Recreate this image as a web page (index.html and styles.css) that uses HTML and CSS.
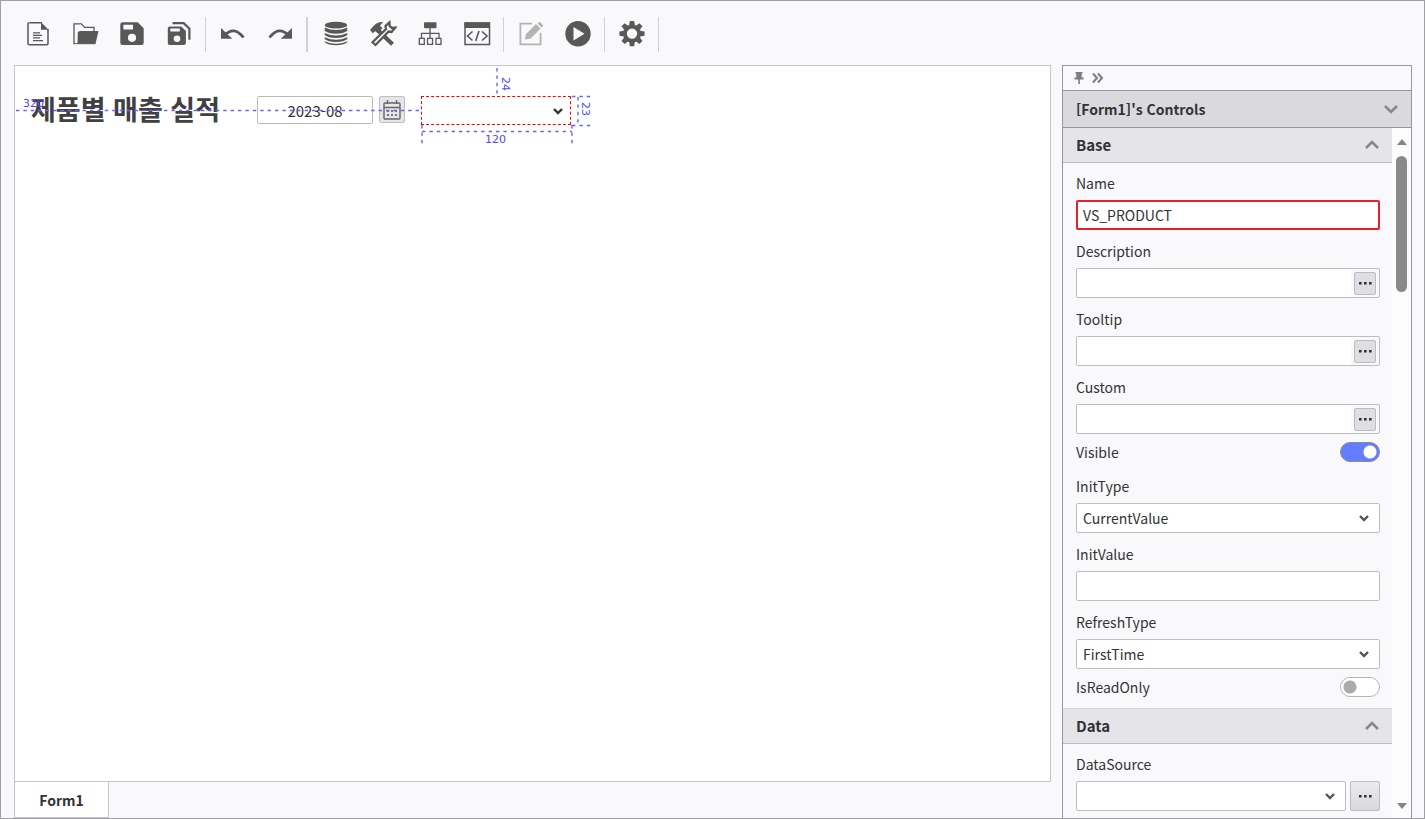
FILE: index.html
```
<!DOCTYPE html>
<html lang="ko">
<head>
<meta charset="utf-8">
<title>Form Designer</title>
<link rel="stylesheet" href="styles.css">
</head>
<body>
<svg class="defs" aria-hidden="true">
  <symbol id="caret" viewBox="0 0 12 8"><path d="M2 2l4 4 4-4" fill="none" stroke="currentColor" stroke-width="2.4"/></symbol>
  <symbol id="fold" viewBox="0 0 16 10"><path d="M2 8l6-6 6 6" fill="none" stroke="currentColor" stroke-width="2.6"/></symbol>
  <symbol id="dots" viewBox="0 0 14 4"><path d="M1 1h2.6v2.4H1zM6 1h2.6v2.4H6zM11 1h2.6v2.4H11z" fill="currentColor"/></symbol>
</svg>
<div class="app">
  <header class="toolbar">
    <button class="tool" aria-label="New"><svg viewBox="0 0 28 28"><path d="M5.500 2.800h12.500M24 9v14.500q0 1.200-1.200 1.200H5.200Q4 24.700 4 23.500V4Q4 2.800 5.200 2.800" fill="none" stroke="currentColor" stroke-width="1.500"/><path d="M17 2.300L24.600 9.700H17z" fill="currentColor"/><path d="M9 12.800h7M9 15.300h9M9 17.900h7M9 20.600h10" stroke="currentColor" stroke-width="1.300"/></svg></button>
    <button class="tool" aria-label="Open"><svg viewBox="0 0 28 28"><path d="M3 24V3.800h7.500l3 3.500H23v4" fill="none" stroke="currentColor" stroke-width="1.300"/><path d="M9 11h18.500l-3 12.800H6.500L6.800 12.600Q7.300 11 9 11z" fill="currentColor"/><path d="M2.400 23.700h22" stroke="currentColor" stroke-width="1"/></svg></button>
    <button class="tool" aria-label="Save"><svg viewBox="0 0 28 28"><path fill="currentColor" fill-rule="evenodd" d="M4.500 2.200h15.200l6 6v14.600q0 2.200-2.200 2.200h-19q-2.200 0-2.200-2.200V4.400q0-2.200 2.200-2.200zM5.400 4.800v4.600h9.600V4.800zM14 13.700a4.100 4.100 0 1 0 0 8.200 4.100 4.100 0 1 0 0-8.200z"/></svg></button>
    <button class="tool" aria-label="Save all"><svg viewBox="0 0 28 28"><path fill="currentColor" fill-rule="evenodd" d="M4.800 6.400h11.600l4.500 4.600v11.800q0 2.200-2.200 2.200H4.800q-2 0-2-2V8.400q0-2 2-2zM5.300 8.600v3h9.500v-3zM12 15.500a3.300 3.300 0 1 0 0 6.600 3.300 3.300 0 1 0 0-6.600z"/><path d="M7.500 3.200h11.200l5.700 5.600v11" fill="none" stroke="currentColor" stroke-width="2.200"/></svg></button>
    <span class="sep"></span>
    <button class="tool" aria-label="Undo"><svg viewBox="0 0 28 28"><path d="M6 15q9-9.500 18.500 2.500" fill="none" stroke="currentColor" stroke-width="2.800"/><path d="M2 8v10.700h11.200z" fill="currentColor"/></svg></button>
    <button class="tool" aria-label="Redo"><svg viewBox="0 0 28 28"><path d="M22 15Q13 5.500 3.500 17.500" fill="none" stroke="currentColor" stroke-width="2.800"/><path d="M26 8v10.700H14.800z" fill="currentColor"/></svg></button>
    <span class="sep thick"></span>
    <button class="tool" aria-label="Database"><svg viewBox="0 0 28 28"><ellipse cx="14" cy="5.200" rx="11.300" ry="3.400" fill="currentColor"/><path fill="currentColor" d="M2.700 7.600q11.300 5 22.600 0v3.200q-3.500 3-11.300 3t-11.300-3zM2.700 12.900q11.300 5 22.600 0v2.200q-3.500 3-11.300 3t-11.300-3zM2.700 17.200q11.300 5 22.600 0v1.900q-3.500 3-11.300 3t-11.300-3zM2.700 21.200q11.300 5 22.600 0v1.100q-3.500 3-11.300 3t-11.300-3z"/></svg></button>
    <button class="tool" aria-label="Tools"><svg viewBox="0 0 28 28"><path d="M8 9.500l15.500 14.700" stroke="currentColor" stroke-width="4.200"/><path d="M1 10L4.500 6q4-4.500 9.500-4L11 5.700l2.500 2.500-5 5-2-2.200-2.700 2.300z" fill="currentColor"/><path d="M3.500 22.300L17 9l-.5-3L20.400 2.400l.3 3.800 2.200 1.800 3.300-.4L22.600 12l-3-.5L6.500 25z" fill="#f9f9fc" stroke="currentColor" stroke-width="2.300"/></svg></button>
    <button class="tool" aria-label="Structure"><svg viewBox="0 0 28 28"><rect x="8" y="2.300" width="12.500" height="6" rx="1" fill="currentColor"/><path d="M14 8v10M5.500 18v-4.700h17.500V18M3.300 18.300h5v6h-5zM11.500 18.300h5v6h-5zM20 18.300h5v6h-5z" fill="none" stroke="currentColor" stroke-width="1.300"/></svg></button>
    <button class="tool" aria-label="Script"><svg viewBox="0 0 28 28"><rect x="2" y="3" width="24.500" height="21.500" fill="none" stroke="currentColor" stroke-width="1.500"/><path d="M1.500 2.300h25.500v5.700H1.500z" fill="currentColor"/><path d="M9.500 11.500l-5 4.500 5 4.500M19 11.500l5 4.500-5 4.500M16 11l-3.300 10" fill="none" stroke="currentColor" stroke-width="1.600"/></svg></button>
    <span class="sep"></span>
    <button class="tool" aria-label="Edit" disabled><svg viewBox="0 0 28 28"><path d="M15 3.700H3.400v20.600h20.200V13" fill="none" stroke="currentColor" stroke-width="1.800"/><path d="M8 19.500l.8-5.300L19 4l4.600 4.600-10.200 10.200zM20.500 3.500l1-1q1-1 2 0l2 2q1 1 0 2l-1 1z" fill="currentColor"/></svg></button>
    <button class="tool" aria-label="Run"><svg viewBox="0 0 28 28"><path fill="currentColor" fill-rule="evenodd" d="M14 1a12.700 12.700 0 1 0 0 25.400A12.700 12.700 0 1 0 14 1zM9.500 7v13.600l11-6.800z"/></svg></button>
    <span class="sep"></span>
    <button class="tool" aria-label="Settings"><svg viewBox="0 0 28 28"><circle cx="14" cy="13.600" r="7.100" fill="none" stroke="currentColor" stroke-width="3.800"/><g fill="currentColor"><path id="tooth" d="M11.800 1h4.400l.6 4.500h-5.600z"/><use href="#tooth" transform="rotate(45 14 13.600)"/><use href="#tooth" transform="rotate(90 14 13.600)"/><use href="#tooth" transform="rotate(135 14 13.600)"/><use href="#tooth" transform="rotate(180 14 13.600)"/><use href="#tooth" transform="rotate(225 14 13.600)"/><use href="#tooth" transform="rotate(270 14 13.600)"/><use href="#tooth" transform="rotate(315 14 13.600)"/></g></svg></button>
    <span class="sep"></span>
  </header>
  <div class="work">
    <main class="editor">
      <section class="canvas">
        <h1 class="title">제품별 매출 실적</h1>
        <input class="date" type="text" value="2023-08" aria-label="Month">
        <button class="calendar" aria-label="Pick month"><svg viewBox="0 0 20 22"><rect x="2" y="4" width="16" height="16" rx="1" fill="none" stroke="#666" stroke-width="1.400"/><path d="M2 8.500h16M5.500 1v4M14.500 1v4" stroke="#666" stroke-width="1.400"/><path d="M5 12h10M5 16h10" stroke="#777" stroke-width="2" stroke-dasharray="2 2"/></svg></button>
        <div class="picked"><select aria-label="VS_PRODUCT"><option></option></select><svg class="caret"><use href="#caret"/></svg></div>
        <svg class="guides" aria-hidden="true">
          <path d="M1 44.500H404M482 2V28M407 65.500H557M407 59V79M557 59V79M557 30.500H576M557 59.500H576M563 31V59"/>
          <text x="8" y="41">320</text>
          <text x="470" y="77">120</text>
          <text transform="translate(487 11) rotate(90)">24</text>
          <text transform="translate(567 36) rotate(90)">23</text>
        </svg>
      </section>
      <nav class="tabs"><button class="tab">Form1</button></nav>
    </main>
    <aside class="panel">
      <div class="panel-tools">
        <button aria-label="Pin"><svg class="pin" viewBox="0 0 12 14"><path d="M2.500 1h7v1.500h-.8v4h1.800v2h-3.600V13H5.300V8.500H1.500v-2h1.800v-4h-.8z" fill="currentColor"/></svg></button>
        <button aria-label="Collapse"><svg class="more" viewBox="0 0 14 12"><path d="M2 1.500L6 6l-4 4.500M7 1.500L11 6l-4 4.500" fill="none" stroke="currentColor" stroke-width="2"/></svg></button>
      </div>
      <button class="panel-title">[Form1]'s Controls<svg class="fold down"><use href="#fold"/></svg></button>
      <div class="scroller">
        <div class="props">
          <button class="group">Base<svg class="fold"><use href="#fold"/></svg></button>
          <div class="fields">
            <div class="field"><label for="name">Name</label><input class="box marked" id="name" type="text" value="VS_PRODUCT"></div>
            <div class="field"><label for="desc">Description</label><div class="box combo"><input id="desc" type="text"><button class="mini" aria-label="Edit description"><svg class="dots"><use href="#dots"/></svg></button></div></div>
            <div class="field"><label for="tip">Tooltip</label><div class="box combo"><input id="tip" type="text"><button class="mini" aria-label="Edit tooltip"><svg class="dots"><use href="#dots"/></svg></button></div></div>
            <div class="field"><label for="custom">Custom</label><div class="box combo"><input id="custom" type="text"><button class="mini" aria-label="Edit custom"><svg class="dots"><use href="#dots"/></svg></button></div></div>
            <div class="switch"><label for="visible">Visible</label><input id="visible" type="checkbox" checked></div>
            <div class="field"><label for="itype">InitType</label><div class="box pick"><select id="itype"><option>CurrentValue</option></select><svg class="caret"><use href="#caret"/></svg></div></div>
            <div class="field"><label for="ivalue">InitValue</label><input class="box" id="ivalue" type="text"></div>
            <div class="field"><label for="rtype">RefreshType</label><div class="box pick"><select id="rtype"><option>FirstTime</option></select><svg class="caret"><use href="#caret"/></svg></div></div>
            <div class="switch"><label for="ro">IsReadOnly</label><input id="ro" type="checkbox"></div>
          </div>
          <button class="group ruled">Data<svg class="fold"><use href="#fold"/></svg></button>
          <div class="fields">
            <div class="field"><label for="source">DataSource</label><div class="pair"><div class="box pick"><select id="source"><option></option></select><svg class="caret"><use href="#caret"/></svg></div><button class="browse" aria-label="Browse data sources"><svg class="dots"><use href="#dots"/></svg></button></div></div>
          </div>
        </div>
        <div class="scrollbar"><span class="arrow up"></span><span class="thumb"></span><span class="arrow"></span></div>
      </div>
    </aside>
  </div>
</div>
</body>
</html>
```
FILE: styles.css
```
* { box-sizing: border-box; }
body {
  margin: 0;
  font: 15px/20px "Noto Sans CJK KR", "Noto Sans", sans-serif;
  color: #333;
}
button, input, select { font: inherit; color: inherit; margin: 0; }
button { padding: 0; border: 0; background: none; }
input, select { min-width: 0; outline: 0; }
svg { display: block; flex: none; }
.defs { position: absolute; width: 0; height: 0; }

.app {
  display: flex;
  flex-direction: column;
  height: 100vh;
  border: 1px solid #a0a0a4;
  background: #f9f9fc;
  overflow: hidden;
}
.toolbar { display: flex; align-items: center; flex: none; height: 64px; padding: 2px 13px 0; }
.tool { display: grid; place-items: center; width: 47px; height: 40px; color: #585858; }
.tool svg { width: 28px; height: 28px; }
.tool:disabled { color: #b4b4b4; }
.sep { width: 1px; height: 35px; margin: 0 3px; background: #d2d2d5; }
.sep.thick { width: 2px; margin: 0 4px 0 3px; }

.work { display: flex; flex: 1; min-height: 0; padding: 0 12px 0 13px; gap: 11px; }
.editor { display: flex; flex-direction: column; flex: 1; min-width: 0; }
.canvas { position: relative; flex: 1; border: 1px solid #c6c6c9; background: #fff; }
.tabs { display: flex; flex: none; height: 36px; }
.tab { width: 95px; border: 1px solid #c6c6c9; border-top: 0; background: #fff; font-weight: 700; font-size: 14px; }

/* Controls placed on the form */
.title { position: absolute; left: 16px; top: 27px; margin: 0; font: 700 27px/32px "Noto Sans CJK KR", sans-serif; color: #404040; white-space: nowrap; }
.date { position: absolute; left: 242px; top: 30px; width: 116px; height: 28px; border: 1px solid #b9b9bc; border-radius: 2px; text-align: center; }
.calendar { position: absolute; left: 364px; top: 30px; display: grid; place-items: center; width: 26px; height: 27px; border: 1px solid #c0c0c3; border-radius: 2px; background: #e6e6ea; }
.calendar svg { width: 20px; height: 22px; }
.picked { position: absolute; left: 406px; top: 30px; display: flex; align-items: center; width: 150px; height: 29px; padding-right: 6px; border: 1px dashed #f00; }
.guides { position: absolute; inset: 0; width: 100%; height: 100%; pointer-events: none; }
.guides path { fill: none; stroke: #6464fa; stroke-width: 1.4; stroke-dasharray: 3.4 4; }
.guides text { font: 11px "DejaVu Sans", sans-serif; fill: #4b4bf5; }

/* Property panel */
.panel { display: flex; flex-direction: column; flex: 0 0 350px; border: 1px solid #98989b; border-bottom: 0; }
.panel-tools { display: flex; align-items: center; gap: 6px; height: 24px; flex: none; padding-left: 10px; color: #7c7c80; }
.pin { width: 12px; height: 14px; }
.more { width: 14px; height: 12px; }
.panel-title, .group { display: flex; align-items: center; justify-content: space-between; flex: none; width: 100%; font-weight: 700; text-align: left; }
.panel-title { height: 38px; padding: 0 12px 0 13px; border: solid #98989b; border-width: 1px 0; background: #dadade; font-size: 14px; }
.fold { width: 16px; height: 10px; color: #88888c; }
.fold.down { transform: rotate(180deg); }
.scroller { display: flex; flex: 1; min-height: 0; }
.props { flex: 1; min-width: 0; overflow: hidden; }
.group { height: 35px; padding: 0 12px 0 13px; border-bottom: 1px solid #bcbcc0; background: #e5e5e9; }
.ruled { height: 36px; border-top: 1px solid #d6d6da; }
.fields { display: flex; flex-direction: column; gap: 8px; padding: 7px 12px 8px 13px; font-size: 14px; }
.field { display: flex; flex-direction: column; gap: 4px; }
.field label { line-height: 26px; }
.box { width: 100%; height: 30px; padding: 0 6px; border: 1px solid #bdbdc0; border-radius: 2px; background: #fff; }
.marked { border: 2px solid #e8202a; padding: 0 5px; }
.combo { display: flex; align-items: center; padding: 0 3px 0 0; background: #f9f9fc; gap: 3px; }
.combo input { flex: 1; height: 28px; border: 0; background: #fff; }
.mini { display: grid; place-items: center; width: 22px; height: 23px; border: 1px solid #bdbdc0; border-radius: 2px; background: #dfdfe3; }
.dots { width: 14px; height: 4px; color: #333; }
.pick { display: flex; align-items: center; padding-right: 9px; }
.pick select, .picked select { flex: 1; height: 26px; padding: 0; border: 0; appearance: none; background: none; }
.caret { width: 12px; height: 8px; color: #555; }
.picked .caret { color: #333; }
.pair { display: flex; gap: 4px; }
.pair .box { flex: 1; }
.browse { display: grid; place-items: center; width: 30px; height: 30px; border: 1px solid #bdbdc0; border-radius: 2px; background: linear-gradient(#ebebef, #d9d9dd); }
.switch { display: flex; justify-content: space-between; padding-bottom: 3px; }
.switch input { width: 40px; height: 20px; border: 1px solid #b5b5b8; border-radius: 10px; appearance: none; background: radial-gradient(circle at 9px 9px, #ababab 6px, transparent 7px) #fff; }
.switch input:checked { border-color: #8c8c94; background: radial-gradient(circle at 29px 9px, #fff 6px, transparent 7px) #627dff; }

.scrollbar { display: flex; flex-direction: column; align-items: center; width: 19px; padding: 11px 0 9px; background: #fcfcfc; }
.arrow { border: 5px solid transparent; border-top: 6px solid #858585; border-bottom: 0; }
.arrow.up { border-top: 0; border-bottom: 6px solid #858585; }
.thumb { width: 11px; height: 136px; margin: 11px 0 auto; border-radius: 6px; background: #8a8a8a; }
```
